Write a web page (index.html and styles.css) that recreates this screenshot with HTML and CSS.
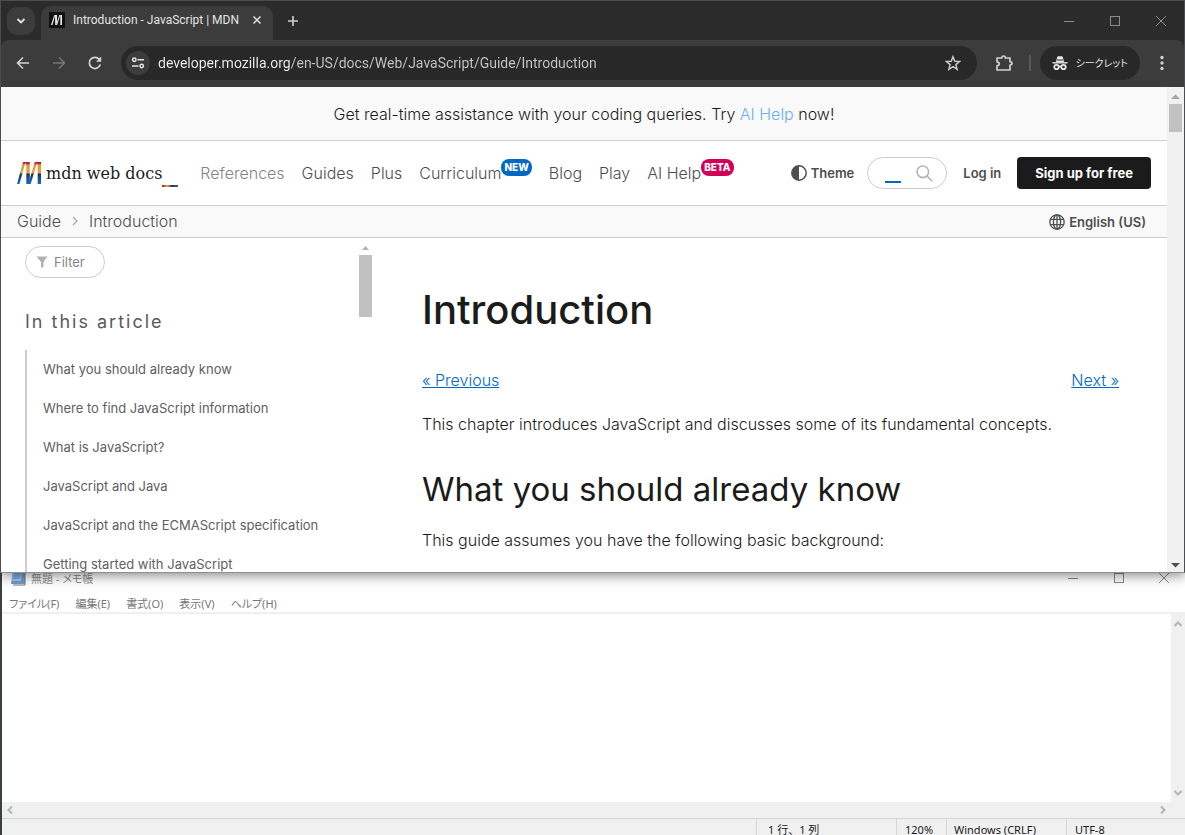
FILE: index.html
```html
<!DOCTYPE html>
<html lang="en-US">
<head>
<meta charset="utf-8">
<title>Introduction - JavaScript | MDN</title>
<link rel="stylesheet" href="styles.css">
</head>
<body>
<div class="desktop">
<section class="browser" aria-label="Browser">
  <header class="chrome">
    <div class="tabstrip">
      <button class="tab-search" aria-label="Search tabs"><svg width="10" height="10" viewBox="0 0 10 10"><path d="M1.500 3l3.500 3.500L8.500 3" fill="none" stroke="#e3e3e3" stroke-width="1.800"/></svg></button>
      <div class="tab">
        <svg class="favicon" width="16" height="16" viewBox="0 0 16 16"><rect width="16" height="16" fill="#111"/><g fill="#e8e8e8"><path d="M5.300 3h1L3.500 13H2z"/><path d="M6 3h2v7.500L7.200 13H6.200z"/><path d="M10.300 3h1L8.200 13H7z"/><path d="M11.300 3H13v10h-1.700z"/></g></svg>
        <span class="tab-title">Introduction - JavaScript | MDN</span>
        <button class="tab-close" aria-label="Close tab"><svg width="10" height="10" viewBox="0 0 10 10"><path d="M1.500 1.500l7 7M8.500 1.500l-7 7" stroke="#e3e3e3" stroke-width="1.500"/></svg></button>
      </div>
      <button class="new-tab" aria-label="New tab"><svg width="12" height="12" viewBox="0 0 12 12"><path d="M6 1v10M1 6h10" stroke="#d0d0d0" stroke-width="1.600"/></svg></button>
      <div class="captions">
        <button class="caption" aria-label="Minimize"><svg width="10" height="10"><path d="M0 5.500h10" stroke="#8d8d8d"/></svg></button>
        <button class="caption" aria-label="Maximize"><svg width="10" height="10"><rect x=".5" y=".5" width="9" height="9" fill="none" stroke="#8d8d8d"/></svg></button>
        <button class="caption" aria-label="Close"><svg width="10" height="10"><path d="M0 0l10 10M10 0L0 10" stroke="#8d8d8d"/></svg></button>
      </div>
    </div>
    <div class="toolbar">
      <button class="tool" aria-label="Back"><svg width="16" height="16" viewBox="0 0 16 16"><path d="M14 8H3M8 2.500L2.500 8 8 13.500" fill="none" stroke="#d4d4d4" stroke-width="1.600"/></svg></button>
      <button class="tool" aria-label="Forward"><svg width="16" height="16" viewBox="0 0 16 16"><path d="M2 8h11M8 2.500L13.500 8 8 13.500" fill="none" stroke="#757575" stroke-width="1.600"/></svg></button>
      <button class="tool" aria-label="Reload"><svg width="16" height="16" viewBox="0 0 16 16"><path d="M13.300 9.500A5.600 5.600 0 1 1 12.300 4.400L13.500 6" fill="none" stroke="#d4d4d4" stroke-width="1.700"/><path d="M14.200 1.500v5.300H9z" fill="#d4d4d4"/></svg></button>
      <div class="omnibox">
        <button class="site-info" aria-label="View site information"><svg width="14" height="14" viewBox="0 0 14 14"><g fill="none" stroke="#e3e3e3" stroke-width="1.500"><circle cx="3.300" cy="3.700" r="1.700"/><path d="M6.500 3.700H13M1 10h6.500"/><circle cx="10.700" cy="10" r="1.700"/></g></svg></button>
        <input class="address" type="text" aria-label="Address" value="developer.mozilla.org/en-US/docs/Web/JavaScript/Guide/Introduction">
        <button class="star" aria-label="Bookmark"><svg width="16" height="16" viewBox="0 0 16 16"><path d="M8 1.700l1.800 4.500 4.800.3-3.700 3.100 1.200 4.700L8 11.700l-4.100 2.600 1.200-4.700L1.400 6.500l4.800-.3z" fill="none" stroke="#c9c9c9" stroke-width="1.500"/></svg></button>
      </div>
      <button class="tool extensions" aria-label="Extensions"><svg width="18" height="18" viewBox="0 0 18 18"><path d="M2 4h4.700C6.700 1.300 10.300 1.300 10.300 4H15v3.700c2.600 0 2.600 3.300 0 3.300V16H2v-4.200c3-.5 3-3.600 0-4z" fill="none" stroke="#d0d0d0" stroke-width="1.700" stroke-linejoin="round"/></svg></button>
      <span class="divider"></span>
      <button class="incognito" lang="ja"><svg width="16" height="16" viewBox="0 0 16 16"><path d="M4 7l1.200-5 1.300-1L8 1.600 9.500 1l1.300 1L12 7z" fill="#e8e8e8"/><path d="M5 5h6" stroke="#282828"/><path d="M.5 7.800h15" stroke="#e8e8e8" stroke-width="1.400"/><g fill="none" stroke="#e8e8e8" stroke-width="1.800"><circle cx="4.500" cy="12" r="2.200"/><circle cx="11.500" cy="12" r="2.200"/><path d="M6.500 11.500h3"/></g></svg><span>シークレット</span></button>
      <button class="tool menu" aria-label="Menu"><svg width="4" height="16" viewBox="0 0 4 16" fill="#d0d0d0"><circle cx="2" cy="2.500" r="1.700"/><circle cx="2" cy="8" r="1.700"/><circle cx="2" cy="13.500" r="1.700"/></svg></button>
    </div>
  </header>
  <div class="viewport">
    <div class="page">
      <p class="banner">Get real-time assistance with your coding queries. Try <a href="#ai">AI Help</a> now!</p>
      <header class="site-nav">
        <a class="logo" href="#home" aria-label="MDN home">
          <svg width="25" height="22" viewBox="0 0 25 22"><defs><linearGradient id="m" x1="0" y1="0" x2="0" y2="22" gradientUnits="userSpaceOnUse"><stop offset="0" stop-color="#b5132f"/><stop offset=".08" stop-color="#c9303a"/><stop offset=".14" stop-color="#e39a3b"/><stop offset=".48" stop-color="#dca64f"/><stop offset=".56" stop-color="#2c3038"/><stop offset=".72" stop-color="#174c92"/><stop offset="1" stop-color="#1769c9"/></linearGradient></defs><g fill="url(#m)"><path d="M6 0h2.500L2.500 22H0z"/><path d="M8 0H12.800v16L12 22H9.300V4z"/><path d="M17.800 0h2.500L13.700 22h-2.500z"/><path d="M19.500 0H24v22h-3.300V4z"/></g></svg>
          <span class="logo-text">mdn web docs</span><span class="logo-cursor"></span>
        </a>
        <nav class="links">
          <a class="muted" href="#references">References</a>
          <a href="#guides">Guides</a>
          <a href="#plus">Plus</a>
          <a href="#curriculum">Curriculum<span class="badge new">NEW</span></a>
          <a href="#blog">Blog</a>
          <a href="#play">Play</a>
          <a href="#aihelp">AI Help<span class="badge beta">BETA</span></a>
        </nav>
        <div class="actions">
          <button class="theme"><svg width="16" height="16" viewBox="0 0 16 16"><circle cx="8" cy="8" r="7.200" fill="#fff" stroke="#4e4e4e" stroke-width="1.500"/><path d="M8 1a7 7 0 0 0 0 14z" fill="#4e4e4e"/></svg>Theme</button>
          <form class="search"><input type="text" aria-label="Search"><span class="search-cursor"></span><button type="button" aria-label="Search"><svg width="17" height="17" viewBox="0 0 17 17" fill="none" stroke="#b3b3b3" stroke-width="1.600"><circle cx="6.800" cy="6.800" r="5.800"/><path d="M11 11l5.300 5.300"/></svg></button></form>
          <a class="login" href="#login">Log in</a>
          <a class="signup" href="#signup">Sign up for free</a>
        </div>
      </header>
      <div class="crumb-bar">
        <nav class="crumbs"><a href="#guide">Guide</a><svg width="6" height="10" viewBox="0 0 6 10"><path d="M1 1l4 4-4 4" fill="none" stroke="#aaa" stroke-width="1.300"/></svg><a href="#intro">Introduction</a></nav>
        <button class="language"><svg width="16" height="16" viewBox="0 0 16 16" fill="none" stroke="#4e4e4e" stroke-width="1.300"><circle cx="8" cy="8" r="7.200"/><ellipse cx="8" cy="8" rx="3.600" ry="7.200"/><path d="M8 1v14M1.500 5.300h13M1.500 10.700h13"/></svg>English (US)</button>
      </div>
      <div class="columns">
        <aside class="sidebar">
          <div class="sidebar-body">
            <label class="filter"><svg width="12" height="12" viewBox="0 0 12 12"><path d="M.5.500h11L7.500 6v5L5 12V6z" fill="#b3b3b3"/></svg><input type="text" placeholder="Filter" aria-label="Filter"></label>
            <h2>In this article</h2>
            <ul>
              <li><a href="#a">What you should already know</a></li>
              <li><a href="#b">Where to find JavaScript information</a></li>
              <li><a href="#c">What is JavaScript?</a></li>
              <li><a href="#d">JavaScript and Java</a></li>
              <li><a href="#e">JavaScript and the ECMAScript specification</a></li>
              <li><a href="#f">Getting started with JavaScript</a></li>
            </ul>
          </div>
          <div class="side-scroll"><svg width="9" height="5" viewBox="0 0 9 5"><path d="M1 5l3.500-4L8 5z" fill="#b3b3b3"/></svg><span></span></div>
        </aside>
        <main class="article">
          <h1>Introduction</h1>
          <div class="prev-next"><a href="#prev">« Previous</a><a href="#next">Next »</a></div>
          <p>This chapter introduces JavaScript and discusses some of its fundamental concepts.</p>
          <h2>What you should already know</h2>
          <p>This guide assumes you have the following basic background:</p>
        </main>
      </div>
    </div>
    <div class="page-scroll">
      <svg width="9" height="5" viewBox="0 0 9 5"><path d="M0 5l4.500-4.500L9 5z" fill="#a3a3a3"/></svg>
      <span class="thumb"></span>
      <svg class="down" width="9" height="5" viewBox="0 0 9 5"><path d="M0 0l4.500 4.500L9 0z" fill="#505050"/></svg>
    </div>
  </div>
</section>
<section class="notepad" lang="ja" aria-label="メモ帳">
  <header class="np-title">
    <svg width="16" height="16" viewBox="0 0 16 16"><path d="M3 0h12v14H1z" fill="#6d9bc9"/><path d="M3 2h9l-1 9H2z" fill="#9fc9ee"/><path d="M4 4h7M4 6h7M3 8h7" stroke="#5d92c9"/><path d="M15 1v14H3" fill="none" stroke="#77777f"/></svg>
    <span class="np-name">無題 - メモ帳</span>
    <div class="np-captions">
      <button aria-label="最小化"><svg width="10" height="10"><path d="M0 5.500h10" stroke="#888"/></svg></button>
      <button aria-label="最大化"><svg width="10" height="10"><rect x=".5" y=".5" width="9" height="9" fill="none" stroke="#888"/></svg></button>
      <button aria-label="閉じる"><svg width="10" height="10"><path d="M0 0l10 10M10 0L0 10" stroke="#888"/></svg></button>
    </div>
  </header>
  <nav class="np-menu"><button>ファイル(F)</button><button>編集(E)</button><button>書式(O)</button><button>表示(V)</button><button>ヘルプ(H)</button></nav>
  <div class="np-edit">
    <textarea aria-label="本文"></textarea>
    <div class="np-vscroll"><svg width="8" height="6" viewBox="0 0 8 6"><path d="M.5 5L4 1.500 7.500 5" fill="none" stroke="#b5b5b5" stroke-width="2"/></svg><svg width="8" height="6" viewBox="0 0 8 6"><path d="M.5 1L4 4.500 7.500 1" fill="none" stroke="#b5b5b5" stroke-width="2"/></svg></div>
  </div>
  <div class="np-hscroll"><svg width="6" height="8" viewBox="0 0 6 8"><path d="M5 .5L1.500 4 5 7.500" fill="none" stroke="#b5b5b5" stroke-width="2"/></svg><svg width="6" height="8" viewBox="0 0 6 8"><path d="M1 .5L4.500 4 1 7.500" fill="none" stroke="#b5b5b5" stroke-width="2"/></svg></div>
  <footer class="np-status"><span class="position">1 行、1 列</span><span class="zoom">120%</span><span class="eol">Windows (CRLF)</span><span class="encoding">UTF-8</span></footer>
</section>
</div>
</body>
</html>
```
FILE: styles.css
```css
* { box-sizing: border-box; }
body { margin: 0; background: #3b4043; font-family: Inter, "Noto Sans", sans-serif; }
button { border: 0; padding: 0; background: none; font: inherit; color: inherit; display: flex; align-items: center; justify-content: center; cursor: pointer; }
input, textarea { border: 0; padding: 0; background: none; outline: 0; min-width: 0; font: inherit; }
a { color: inherit; text-decoration: none; }
svg { display: block; flex: none; }

.desktop { height: 100vh; display: grid; grid-template-rows: 573fr 262fr; overflow: hidden; }

/* Browser window */
.browser { position: relative; display: flex; flex-direction: column; min-height: 0; border: 1px solid #4a4e52; border-bottom-color: #909090; box-shadow: 0 2px 12px rgba(0, 0, 0, .5); background: #fff; }
.chrome { background: #2b2b2b; font-family: Roboto, "Noto Sans", sans-serif; color: #e3e3e3; }
.tabstrip { height: 39px; display: flex; align-items: center; padding-left: 6px; }
.tab-search { width: 28px; height: 28px; border-radius: 10px; background: #3c3c3c; }
.tab { align-self: flex-end; height: 34px; width: 232px; margin-left: 6px; padding: 0 8px 6px 8px; border-radius: 10px 10px 0 0; background: #3c3c3c; display: flex; align-items: center; }
.tab-title { margin-left: 8px; flex: 1; font-size: 12px; white-space: nowrap; }
.tab-close { width: 16px; height: 16px; }
.new-tab { width: 28px; height: 28px; margin-left: 6px; }
.captions { margin-left: auto; display: flex; }
.caption { width: 46px; height: 39px; }
.toolbar { height: 47px; display: flex; align-items: center; background: #3c3c3c; border-radius: 8px 8px 0 0; padding: 0 0 2px 4px; }
.tool { width: 36px; height: 34px; }
.omnibox { flex: 1; height: 34px; margin-left: 8px; padding: 0 16px 0 5px; border-radius: 17px; background: #282828; display: flex; align-items: center; }
.site-info { width: 24px; height: 24px; border-radius: 12px; background: #3c3c3c; }
.address { flex: 1; margin-left: 8px; font-size: 14px; line-height: 20px; color: #e3e3e3; -webkit-text-fill-color: transparent; background: linear-gradient(90deg, #f1f1f1 133px, #c7c7c7 133px); -webkit-background-clip: text; background-clip: text; }
.star { width: 16px; height: 24px; }
.extensions { margin-left: 9px; }
.divider { width: 2px; height: 16px; margin: 0 9px 0 7px; background: #5c5656; }
.incognito { height: 34px; padding: 0 12px; gap: 8px; border-radius: 17px; background: #282828; font-family: "Noto Sans CJK JP", sans-serif; font-size: 10px; font-feature-settings: "palt"; white-space: nowrap; }
.menu { width: 44px; }

.viewport { flex: 1; min-height: 0; display: flex; }
.page { flex: 1; min-width: 0; display: flex; flex-direction: column; color: #1b1b1b; font-size: 16px; font-weight: 300; }
.banner { margin: 0; height: 54px; line-height: 54px; background: #f9f9f9; border-bottom: 1px solid #cdcdcd; text-align: center; }
.banner a { color: #6ab1f0; }
.site-nav { height: 65px; display: flex; align-items: center; padding: 0 16px; border-bottom: 1px solid #cdcdcd; color: #4e4e4e; white-space: nowrap; }
.logo { display: flex; align-items: center; height: 28px; color: #1b1b1b; }
.logo-text { margin-left: 4px; padding-top: 2px; font: 16px/22px "DejaVu Serif", serif; }
.logo-cursor { width: 16px; height: 2px; align-self: flex-end; background: linear-gradient(90deg, #b5132f, #dca64f 35%, #333 60%, #1769c9); }
.links { display: flex; gap: 17px; margin-left: 22px; }
.muted { color: #858585; }
.badge { display: inline-block; height: 17px; padding: 0 3px; border-radius: 8px; color: #fff; font-size: 10px; font-weight: 800; line-height: 17px; vertical-align: top; margin-top: -4px; }
.new { background: #0069c2; }
.beta { background: #d30058; }
.actions { margin-left: auto; display: flex; align-items: center; gap: 16px; font-size: 13px; font-weight: 600; }
.theme, .language { gap: 4px; }
.search { width: 80px; height: 32px; margin-left: -3px; border: 1px solid #cdcdcd; border-radius: 16px; display: flex; align-items: center; padding: 0 13px 0 0; }
.search input { width: 16px; flex: 1; }
.search-cursor { width: 16px; height: 2px; align-self: flex-end; margin: 0 15px 5px 0; background: #0069c2; }
.signup { height: 32px; line-height: 32px; padding: 0 18px; border-radius: 4px; background: #1b1b1b; color: #fff; font-weight: 700; }
.crumb-bar { height: 32px; display: flex; align-items: center; justify-content: space-between; padding: 0 21px 0 16px; background: #f9f9f9; border-bottom: 1px solid #cdcdcd; color: #4e4e4e; }
.crumbs { display: flex; align-items: center; gap: 11px; line-height: 20px; padding-bottom: 2px; }
.language { font-size: 13px; font-weight: 600; }
.columns { flex: 1; min-height: 0; display: grid; grid-template-columns: 373px 1fr; gap: 48px; padding-right: 48px; overflow: hidden; }
.sidebar { display: flex; min-height: 0; color: #4e4e4e; }
.sidebar-body { flex: 1; padding: 8px 0 0 24px; }
.filter { width: 80px; height: 32px; border: 1px solid #cdcdcd; border-radius: 16px; padding: 0 10px; display: flex; align-items: center; gap: 6px; }
.filter input { width: 100%; font-size: 13px; font-weight: 400; }
.filter input::placeholder { color: #858585; opacity: 1; }
.sidebar h2 { margin: 28px 0 12px; font-size: 18px; line-height: 32px; font-weight: 400; color: #5a5a5a; letter-spacing: 2px; }
.sidebar ul { margin: 0; padding: 0 0 0 16px; list-style: none; border-left: 2px solid #cdcdcd; font-size: 13px; font-weight: 400; line-height: 19px; color: #606060; }
.sidebar li { padding: 10px 0; }
.side-scroll { width: 15px; padding: 7px 2px 0 0; display: flex; flex-direction: column; align-items: center; gap: 5px; }
.side-scroll span { width: 13px; height: 62px; background: #c1c1c1; }
.article h1 { margin: 48px 0 0; font-size: 40px; line-height: 48px; font-weight: 550; }
.prev-next { margin-top: 34px; display: flex; justify-content: space-between; line-height: 24px; color: #0069c2; }
.prev-next a { text-decoration: underline; }
.article p { margin: 20px 0 0; line-height: 24px; }
.article h2 { margin: 34px 0 0; font-size: 33px; line-height: 38px; font-weight: 400; }
.page-scroll { width: 17px; padding: 7px 0 4px; display: flex; flex-direction: column; align-items: center; background: #f1f1f1; }
.thumb { width: 13px; height: 28px; margin-top: 5px; background: #c1c1c1; }
.down { margin-top: auto; }

/* Notepad window */
.notepad { margin-left: 2px; min-height: 0; display: flex; flex-direction: column; background: #fff; font-family: "Noto Sans", "Noto Sans CJK JP", sans-serif; font-size: 11px; color: #1b1b1b; }
.np-title { height: 17px; flex: none; display: flex; align-items: center; padding-left: 8px; padding-bottom: 7px; color: #8a8a8a; }
.np-name { margin-left: 5px; font-feature-settings: "palt"; }
.np-captions { margin-left: auto; display: flex; }
.np-captions button { width: 46px; height: 12px; }
.np-captions button:last-child { width: 43px; }
.np-menu { height: 24px; flex: none; display: flex; align-items: center; gap: 16px; padding: 4px 0 0 7px; color: #777; border-bottom: 2px solid #f0f0f0; font-feature-settings: "palt"; }
.np-edit { flex: 1; min-height: 0; display: flex; }
.np-edit textarea { flex: 1; resize: none; }
.np-vscroll { width: 14px; padding: 7px 0 6px; display: flex; flex-direction: column; align-items: center; justify-content: space-between; background: #f0f0f0; }
.np-hscroll { height: 16px; flex: none; display: flex; align-items: center; justify-content: space-between; padding: 0 19px 0 5px; background: #f0f0f0; }
.np-status { height: 17px; flex: none; overflow: hidden; display: flex; justify-content: flex-end; border-top: 1px solid #d7d7d7; background: #f0f0f0; line-height: 22px; }
.np-status span { border-left: 1px solid #d7d7d7; }
.position { width: 140px; padding-left: 11px; }
.zoom { width: 50px; padding-left: 8px; }
.eol { width: 120px; padding-left: 7px; }
.encoding { width: 119px; padding-left: 8px; }
```
